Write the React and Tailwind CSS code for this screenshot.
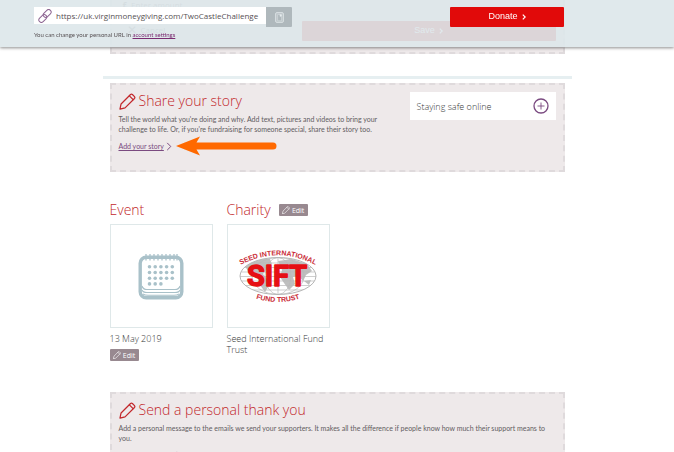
import { clsx } from 'clsx'

const heading = "font-['Open_Sans',sans-serif] text-[14px] leading-[18px] font-light text-[#c2272b]"
const body = "font-[Lato,sans-serif] text-[7px] leading-[10px] text-[#625c5f]"
const label = "font-['Open_Sans',sans-serif] text-[9px] leading-[11px] font-light text-[#37393a]"

function Pencil({ className }) {
  return (
    <svg viewBox="0 0 18 18" className={className} fill="none" stroke="currentColor" strokeLinejoin="round" strokeLinecap="round" aria-hidden="true">
      <path d="M1 17 L2.2 11.6 L12.2 1.6 Q13.2 .8 14.2 1.6 L16.4 3.8 Q17.2 4.8 16.4 5.8 L6.4 15.8 Z" />
      <path d="M11 3 L15 7" />
    </svg>
  )
}

function Chevron({ className }) {
  return (
    <svg viewBox="0 0 6 10" className={className} fill="none" stroke="currentColor" aria-hidden="true">
      <path d="M1 1 L5 5 L1 9" />
    </svg>
  )
}

function EditButton({ name }) {
  return (
    <button type="button" aria-label={name} className="flex h-3 w-[29px] items-center justify-center gap-0.5 rounded-[1px] bg-[#988990] font-['Open_Sans',sans-serif] text-[7px] leading-none text-white">
      <Pencil className="size-2 stroke-[1.4]" />
      Edit
    </button>
  )
}

function Panel({ title, text, link, className, textClass, children }) {
  return (
    <section className={clsx('flex items-start justify-between border-2 border-dashed border-[#dfdadc] bg-[#eee9ea] px-[7px] pt-[7px]', className)}>
      <div className={textClass}>
        <h2 className={clsx(heading, 'flex items-center gap-[3px]')}>
          <Pencil className="size-[17px] stroke-[1.3]" />
          {title}
        </h2>
        <p className={clsx(body, 'mt-1')}>{text}</p>
        <a href="#edit" className="mt-[7px] flex items-center gap-[2px] font-[Lato,sans-serif] text-[7px] leading-[10px] text-[#7a4a80]">
          <span className="underline">{link}</span>
          <Chevron className="h-[9px] w-[6px] stroke-[1.1]" />
        </a>
      </div>
      {children}
    </section>
  )
}

function Calendar() {
  const dots = [5, 5, 5, 3]
  return (
    <svg viewBox="0 0 46 47" className="h-[47px] w-[46px]" fill="none" stroke="#a9c1c9" aria-hidden="true">
      <rect x="2.2" y="4.2" width="41.6" height="40.6" rx="6" strokeWidth="3.4" />
      {[8, 12, 16, 20, 24, 28, 32, 36, 39].map(x => (
        <path key={x} d={`M${x} 1 V7.5`} strokeWidth="1.3" />
      ))}
      <path d="M4 33 Q5 36.5 9 36.5 H37 Q41 36.5 42 33 M4 37 Q5 39.5 9 39.5 H37 Q41 39.5 42 37 M5 41 Q7 42.3 10 42.3 H36 Q39 42.3 41 41" strokeWidth="1.1" />
      {dots.map((n, row) =>
        Array.from({ length: n }, (_, i) => (
          <circle key={`${row}-${i}`} cx={11.5 + i * 5.7} cy={13.8 + row * 5.7} r="1.8" fill="#a9c1c9" stroke="none" />
        ))
      )}
    </svg>
  )
}

function SiftLogo() {
  return (
    <svg viewBox="0 0 80 56" className="h-14 w-20" role="img" aria-label="Seed International Fund Trust">
      <defs>
        <path id="arcTop" d="M1.5 17.5 Q40 -3 78.5 17.5" />
        <path id="arcBottom" d="M14 49 Q40 59 66 49" />
        <clipPath id="globe"><ellipse cx="40" cy="28" rx="38" ry="18.5" /></clipPath>
      </defs>
      <g clipPath="url(#globe)">
        <path d="M7 18 L18 11 L32 11 L34 16 L29 21 L25 26 L29 31 L32 36 L27 44 L22 37 L19 29 L11 25 Z M40 13 L54 11 L69 16 L74 23 L68 27 L65 33 L60 27 L55 29 L57 36 L51 42 L46 35 L42 29 L44 22 Z M66 33 L73 32 L71 37 Z" fill="#bfbfbf" />
        <g fill="none" stroke="#b9b9b9" strokeWidth=".7">
          <ellipse cx="40" cy="28" rx="13" ry="18.5" />
          <ellipse cx="40" cy="28" rx="26" ry="18.5" />
          <path d="M40 9 V47 M0 15 H80 M0 19.5 H80 M0 24 H80 M0 28.5 H80 M0 33 H80 M0 37.5 H80 M0 42 H80" />
        </g>
      </g>
      <ellipse cx="40" cy="28" rx="38" ry="18.5" fill="none" stroke="#b5b5b5" />
      <g fontFamily="Liberation Sans, sans-serif" fontWeight="700" fill="#c92a35" textAnchor="middle">
        <text fontSize="7"><textPath href="#arcTop" startOffset="50%">SEED INTERNATIONAL</textPath></text>
        <text fontSize="7"><textPath href="#arcBottom" startOffset="50%">FUND TRUST</textPath></text>
      </g>
      <text x="39" y="38" textAnchor="middle" fontFamily="Roboto, sans-serif" fontWeight="600" fontSize="29" fill="#e60f14" stroke="#e60f14" strokeWidth="1.6" strokeLinejoin="round">SIFT</text>
    </svg>
  )
}

function Header() {
  return (
    <header className="fixed inset-x-0 top-0 z-10 flex h-[47px] items-start justify-between bg-[#dde7ea]/90 pr-[110px] pl-[34px] pt-[7px] shadow-[0_1px_3px_rgba(0,0,0,0.45)]">
      <div>
        <div className="flex items-start">
          <label className="flex h-[17px] w-[232px] items-center gap-1 bg-white px-1">
            <svg viewBox="0 0 14 14" className="size-[14px] shrink-0" fill="none" stroke="#8d6592" aria-hidden="true">
              <rect x="4.7" y="2" width="9" height="5" rx="2.5" transform="rotate(-45 9.2 4.5)" />
              <rect x=".3" y="7" width="9" height="5" rx="2.5" transform="rotate(-45 4.8 9.5)" />
            </svg>
            <input aria-label="Personal URL" readOnly value="https://uk.virginmoneygiving.com/TwoCastleChallenge" className="w-full min-w-0 font-['Open_Sans',sans-serif] text-[8px] text-[#565053] outline-none" />
          </label>
          <button type="button" aria-label="Copy URL" className="flex h-5 w-[26px] items-center justify-center rounded-r-[1px] bg-[#afb8bc] text-[#e6ecee]">
            <svg viewBox="0 0 9 11" className="h-[11px] w-[9px]" fill="none" stroke="currentColor" aria-hidden="true">
              <rect x=".8" y=".8" width="7.4" height="9.4" rx=".6" />
              <path d="M2.6 2.4 H5 V4.4 H6.6 V8.8 H2.6 Z" strokeWidth=".5" />
              <path d="M5 2.2 H6.8 V4.2 H5 Z" fill="currentColor" stroke="none" />
            </svg>
          </button>
        </div>
        <p className="mt-[3px] font-[Lato,sans-serif] text-[6px] leading-[10px] text-[#565053]">
          You can change your personal URL in <a href="#settings" className="text-[#7a2a70] underline">account settings</a>
        </p>
      </div>
      <button type="button" className="flex h-5 w-[114px] items-center justify-center gap-1 rounded-[1px] bg-[#e10a0a] font-['Liberation_Sans',sans-serif] text-[9px] text-white">
        Donate
        <Chevron className="h-[6px] w-1 stroke-2" />
      </button>
    </header>
  )
}

export default function App() {
  return (
    <div className="h-screen overflow-hidden bg-white">
      <Header />
      <main className="mx-auto w-full max-w-[469px]">
        <section className="mx-[7px] flex h-[54px] justify-between border-2 border-t-0 border-dashed border-[#dfdadc] bg-[#eee9ea] px-[7px]">
          <div className="font-['Open_Sans',sans-serif] text-[8px] leading-[9px] text-[#8c8487]">
            <p className="flex gap-1 pl-1"><b>£</b> Enter amount</p>
            <button type="button" className="mt-4 flex items-center gap-1 pl-2 leading-[9px]">
              <span className="text-[12px]">✕</span> Cancel
            </button>
          </div>
          <button type="button" className="mt-[21px] flex h-5 w-[254px] items-center justify-center gap-1 rounded-[1px] bg-[#d2343a] font-['Liberation_Sans',sans-serif] text-[9px] text-white">
            Save
            <Chevron className="h-[6px] w-1 stroke-2" />
          </button>
        </section>

        <hr className="mt-[22px] mb-1 border-t-3 border-[#e6eff1]" />

        <div className="px-[7px]">
          <Panel
            title="Share your story"
            text="Tell the world what you're doing and why. Add text, pictures and videos to bring your challenge to life. Or, if you're fundraising for someone special, share their story too."
            link="Add your story"
            className="relative h-[89px]"
            textClass="w-[264px]"
          >
            <button type="button" className={clsx(label, 'flex h-7 w-[146px] items-center justify-between bg-white px-[7px]')}>
              Staying safe online
              <svg viewBox="0 0 16 16" className="size-4" fill="none" stroke="#7a4a80" aria-hidden="true">
                <circle cx="8" cy="8" r="7" strokeWidth="1.3" />
                <path d="M8 4.5 V11.5 M4.5 8 H11.5" strokeWidth=".9" />
              </svg>
            </button>
            <svg viewBox="0 0 102 20" className="absolute top-[51px] left-[63px] h-5 w-[102px]" aria-hidden="true">
              <path d="M1 10 L25 .5 L21.5 6.5 H98 A3.5 3.5 0 0 1 98 13.5 H21.5 L25 19.5 Z" fill="#ff6900" />
            </svg>
          </Panel>

          <div className="mt-[29px] flex gap-[14px]">
            <section className="w-[103px]">
              <h2 className={heading}>Event</h2>
              <div className="mt-[5px] flex h-[104px] items-center justify-center border border-[#dfe8e9]">
                <Calendar />
              </div>
              <p className={clsx(label, 'my-[5px]')}>13 May 2019</p>
              <EditButton name="Edit event" />
            </section>
            <section className="w-[103px]">
              <div className="flex items-center gap-2">
                <h2 className={heading}>Charity</h2>
                <EditButton name="Edit charity" />
              </div>
              <div className="mt-[5px] flex h-[104px] items-center justify-center border border-[#dfe8e9]">
                <SiftLogo />
              </div>
              <p className={clsx(label, 'mt-[5px]')}>Seed International Fund Trust</p>
            </section>
          </div>

          <Panel
            title="Send a personal thank you"
            text="Add a personal message to the emails we send your supporters. It makes all the difference if people know how much their support means to you."
            link="Add your message"
            className="mt-[31px] h-[89px]"
          />
        </div>
      </main>
    </div>
  )
}
